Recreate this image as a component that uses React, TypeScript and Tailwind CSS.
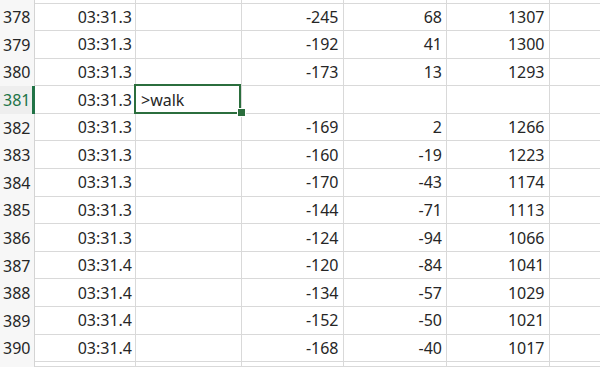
import React from "react";

type Row = {
  n: number;
  a: string;
  b?: string;
  c?: string;
  d?: string;
  e?: string;
};

const rows: Row[] = [
  { n: 378, a: "03:31.3", c: "-245", d: "68", e: "1307" },
  { n: 379, a: "03:31.3", c: "-192", d: "41", e: "1300" },
  { n: 380, a: "03:31.3", c: "-173", d: "13", e: "1293" },
  { n: 381, a: "03:31.3", b: ">walk" },
  { n: 382, a: "03:31.3", c: "-169", d: "2", e: "1266" },
  { n: 383, a: "03:31.3", c: "-160", d: "-19", e: "1223" },
  { n: 384, a: "03:31.3", c: "-170", d: "-43", e: "1174" },
  { n: 385, a: "03:31.3", c: "-144", d: "-71", e: "1113" },
  { n: 386, a: "03:31.3", c: "-124", d: "-94", e: "1066" },
  { n: 387, a: "03:31.4", c: "-120", d: "-84", e: "1041" },
  { n: 388, a: "03:31.4", c: "-134", d: "-57", e: "1029" },
  { n: 389, a: "03:31.4", c: "-152", d: "-50", e: "1021" },
  { n: 390, a: "03:31.4", c: "-168", d: "-40", e: "1017" },
];

const SELECTED = 381;

const cell = "flex items-center border-r border-b border-[#d9d9d9]";

/**
 * One sheet row: header, columns A to F.
 */
const SheetRow = ({ row }: { row?: Row }) => {
  const selected = row?.n === SELECTED;
  const height = row ? "h-[27.6px]" : "";

  return (
    <div className={`flex ${height} ${row ? "" : "h-full"}`}>
      <div
        className={`flex w-[35px] shrink-0 items-center pl-[3px] ${
          selected
            ? "border-r-[3px] border-[#217346] bg-[#eeeeee] text-[#217346]"
            : "border-r border-[#d4d4d4] bg-[#f7f7f7] text-[#262626]"
        }`}
      >
        {row?.n}
      </div>
      <div className={`${cell} w-[101px] justify-end pr-[3px]`}>{row?.a}</div>
      <div className={`${cell} relative w-[105.5px] pl-[5px]`}>
        {row?.b}
        {selected && (
          <>
            <div className="absolute -left-[2px] -top-[2px] h-[30px] w-[107px] border-2 border-[#2b6e3d]" />
            <div className="absolute -bottom-[4px] -right-[5px] h-[7px] w-[7px] border border-white bg-[#2b6e3d] box-content" />
          </>
        )}
      </div>
      <div className={`${cell} w-[102px] justify-end pr-[4px]`}>{row?.c}</div>
      <div className={`${cell} w-[103.5px] justify-end pr-[4px]`}>{row?.d}</div>
      <div className={`${cell} w-[102.5px] justify-end pr-[4px]`}>{row?.e}</div>
      <div className={`${cell} flex-1 border-r-0`} />
    </div>
  );
};

export default function App() {
  return (
    <div className="flex h-[367px] w-[600px] flex-col overflow-hidden bg-white font-['Noto_Sans',sans-serif] text-[16px] text-[#262626]">
      <div className="h-[3.5px] shrink-0">
        <div className="flex h-full">
          <div className="w-[35px] shrink-0 border-r border-[#d4d4d4] bg-[#f7f7f7]" />
          <div className={`${cell} w-[101px]`} />
          <div className={`${cell} w-[105.5px]`} />
          <div className={`${cell} w-[102px]`} />
          <div className={`${cell} w-[103.5px]`} />
          <div className={`${cell} w-[102.5px]`} />
          <div className={`${cell} flex-1 border-r-0`} />
        </div>
      </div>
      {rows.map((row) => (
        <div key={row.n} className={row.n === SELECTED ? "relative z-10" : ""}>
          <SheetRow row={row} />
        </div>
      ))}
      <div className="flex-1">
        <SheetRow />
      </div>
    </div>
  );
}
